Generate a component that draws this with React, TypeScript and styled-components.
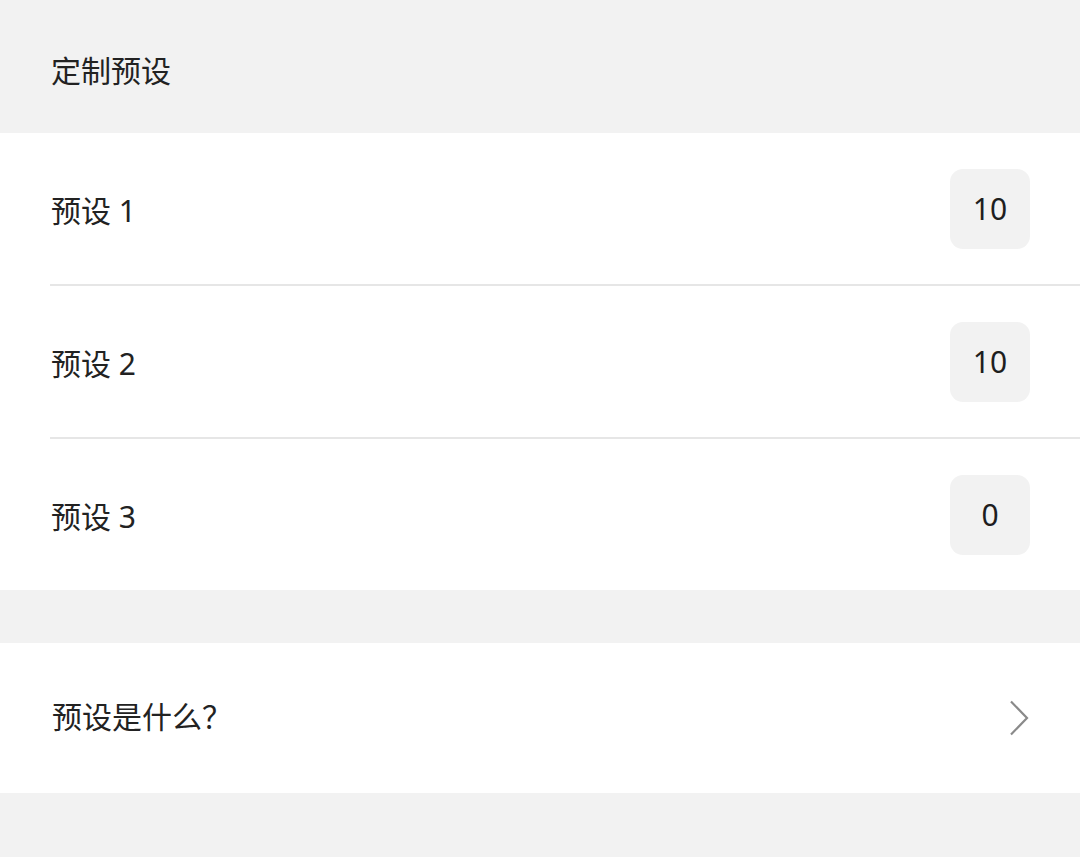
import styled, { createGlobalStyle } from "styled-components";

const GlobalStyle = createGlobalStyle`
    html, body {
        margin: 0;
        padding: 0;
        background: #f2f2f2;
    }
    body {
        font-family: "Noto Sans", "Noto Sans CJK SC", sans-serif;
        color: #222;
    }
`;

const PRESETS = [
    { name: "预设 1", value: 10 },
    { name: "预设 2", value: 10 },
    { name: "预设 3", value: 0 },
];

const Page = styled.div`
    min-height: 857px;
    background: #f2f2f2;
`;

const SectionHeader = styled.div`
    height: 133px;
    display: flex;
    align-items: center;
    padding: 4px 0 0 51px;
    box-sizing: border-box;
    font-size: 30px;
    color: #222;
`;

const Card = styled.div`
    background: white;
`;

const PresetRow = styled.div<{ $last: boolean }>`
    height: 151px;
    margin-left: 50px;
    padding-right: 50px;
    display: flex;
    align-items: center;
    justify-content: space-between;
    border-bottom: ${({ $last }) => ($last ? "none" : "2px solid #e6e6e6")};
`;

const Label = styled.span<{ $raise?: number }>`
    font-size: 30px;
    padding-left: 1px;
    padding-bottom: ${({ $raise }) => $raise ?? 0}px;
    color: #222;
`;

const ValueBox = styled.div`
    width: 80px;
    height: 80px;
    border-radius: 13px;
    background: #f2f2f2;
    display: flex;
    align-items: center;
    justify-content: center;
    font-size: 30px;
    color: #1e1e1e;
`;

const Gap = styled.div`
    height: 53px;
`;

const LinkRow = styled.div`
    height: 150px;
    padding: 0 50px 0 51px;
    display: flex;
    align-items: center;
    justify-content: space-between;
    cursor: pointer;
`;

const Chevron = () => (
    <svg width="22" height="36" viewBox="0 0 22 36">
        <path d="M3 1.5 L19 18 L3 34.5" fill="none" stroke="#8a8a8a" strokeWidth="2.2" />
    </svg>
);

export default function App() {
    return (
        <>
            <GlobalStyle />
            <Page>
                <SectionHeader>定制预设</SectionHeader>
                <Card>
                    {PRESETS.map((p, i) => (
                        <PresetRow key={p.name} $last={i === PRESETS.length - 1}>
                            <Label>{p.name}</Label>
                            <ValueBox>{p.value}</ValueBox>
                        </PresetRow>
                    ))}
                </Card>
                <Gap />
                <Card>
                    <LinkRow>
                        <Label $raise={6}>预设是什么？</Label>
                        <Chevron />
                    </LinkRow>
                </Card>
            </Page>
        </>
    );
}
